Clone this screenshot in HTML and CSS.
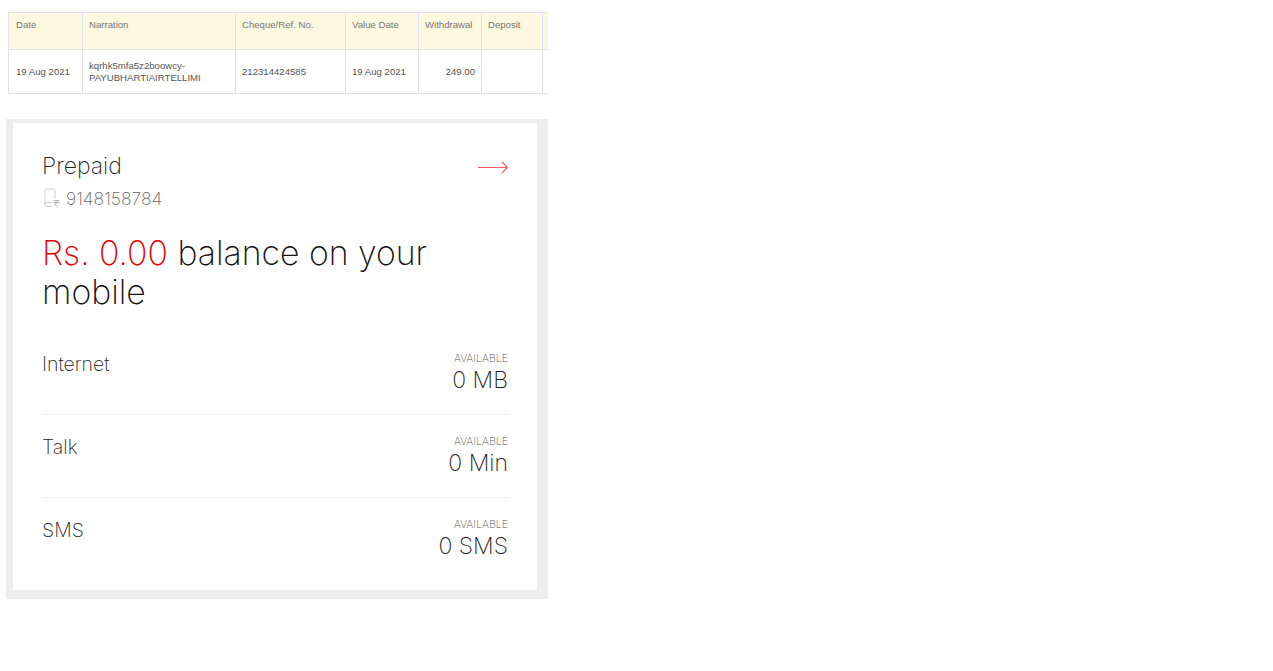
FILE: index.html
```html
<!DOCTYPE html>
<html lang="en">
<head>
<meta charset="utf-8">
<title>Statement and prepaid balance</title>
<link rel="stylesheet" href="styles.css">
</head>
<body>
<div class="table-crop">
  <table class="statement">
    <colgroup>
      <col class="c1"><col class="c2"><col class="c3"><col class="c4"><col class="c5"><col class="c6"><col class="c7">
    </colgroup>
    <thead>
      <tr><th>Date</th><th>Narration</th><th>Cheque/Ref. No.</th><th>Value Date</th><th>Withdrawal</th><th>Deposit</th><th></th></tr>
    </thead>
    <tbody>
      <tr><td>19 Aug 2021</td><td>kqrhk5mfa5z2boowcy-<br>PAYUBHARTIAIRTELLIMI</td><td>212314424585</td><td>19 Aug 2021</td><td class="num">249.00</td><td></td><td></td></tr>
    </tbody>
  </table>
</div>
<div class="frame">
  <section class="card">
    <div class="head">
      <h2 class="title">Prepaid</h2>
      <svg class="arrow" width="32" height="16" viewBox="0 0 32 16" aria-hidden="true"><path d="M1 8.500H30.500M25 3L30.500 8.500L25 14" fill="none" stroke="#ee5a5e" stroke-width="1.100"/></svg>
    </div>
    <div class="phone">
      <svg class="sim" width="18" height="20" viewBox="0 0 18 20" aria-hidden="true"><path d="M12 11V2.500Q12 1 10.500 1H3.500Q2 1 2 2.500V17Q2 18.500 3.500 18.500H9M2 14.500H9" fill="none" stroke="#d4cfcf" stroke-width="1"/><path d="M10.500 12.500H16.500M10.500 14.500H16.500M11.500 12.500Q15 12.800 14.500 14.500Q14 16 11.500 16L15 19.500" fill="none" stroke="#b5b5b5" stroke-width="1"/></svg>
      <span>9148158784</span>
    </div>
    <p class="balance"><span class="amount">Rs. 0.00</span> balance on your mobile</p>
    <div class="row">
      <div class="label">Internet</div>
      <div class="value"><small>AVAILABLE</small><strong>0 MB</strong></div>
    </div>
    <div class="row">
      <div class="label">Talk</div>
      <div class="value"><small>AVAILABLE</small><strong>0 Min</strong></div>
    </div>
    <div class="row">
      <div class="label">SMS</div>
      <div class="value"><small>AVAILABLE</small><strong>0 SMS</strong></div>
    </div>
  </section>
</div>
</body>
</html>
```
FILE: styles.css
```css
html, body { margin: 0; padding: 0; background: #fff; }
body { width: 1273px; height: 671px; overflow: hidden; font-family: "Inter", "Lato", "Liberation Sans", sans-serif; }

.table-crop { width: 540px; margin: 12px 0 0 8px; overflow: hidden; }
.statement { border-collapse: collapse; table-layout: fixed; width: 580px; font-family: "Liberation Sans", Arial, sans-serif; font-size: 9.600px; }
.c1 { width: 74px; } .c2 { width: 153px; } .c3 { width: 110px; } .c4 { width: 73px; } .c5 { width: 63px; } .c6 { width: 61px; } .c7 { width: 46px; }
.statement th, .statement td { border: 1px solid #dfe1ec; padding: 0 6px; text-align: left; font-weight: 400; }
.statement tr > :first-child { padding-left: 7px; }
.statement th { background: #fdf8e0; height: 37px; vertical-align: top; padding-top: 6px; box-sizing: border-box; color: #777; }
.statement td { height: 44px; padding-top: 1px; vertical-align: middle; line-height: 12px; color: #555; box-sizing: border-box; }
.statement td.num { text-align: right; }

.frame { width: 542px; height: 480px; margin: 25px 0 0 6px; box-sizing: border-box; padding: 4px 11px 9px 7px; background: #ededed; }
.card { height: 467px; box-sizing: border-box; background: #fff; padding: 31px 29px 0 30px; color: #333; }
.head { display: flex; justify-content: space-between; align-items: center; height: 26px; }
.title { margin: 0 0 2px -1px; font-size: 23px; font-weight: 200; line-height: 26px; color: #222; }
.arrow { margin-right: -1px; }
.phone { display: flex; align-items: center; gap: 5px; margin-top: 7px; height: 22px; font-size: 17.500px; font-weight: 200; color: #666; }
.balance { margin: 24px 0 0 -1px; width: 430px; font-size: 33.800px; line-height: 39px; font-weight: 200; color: #111; }
.amount { color: #e40000; }
.row { display: flex; justify-content: space-between; height: 83px; box-sizing: border-box; border-bottom: 1px solid #eee; }
.balance + .row { margin-top: 21px; }
.row:last-child { border-bottom: 0; }
.label { font-size: 19.500px; font-weight: 200; line-height: 24px; margin: 20px 0 0 -1px; color: #222; }
.value { text-align: right; margin-top: 21px; }
.value small { display: block; font-size: 10.600px; line-height: 12px; font-weight: 200; color: #555; }
.value strong { display: block; font-size: 23px; line-height: 31px; font-weight: 200; color: #222; }
```
